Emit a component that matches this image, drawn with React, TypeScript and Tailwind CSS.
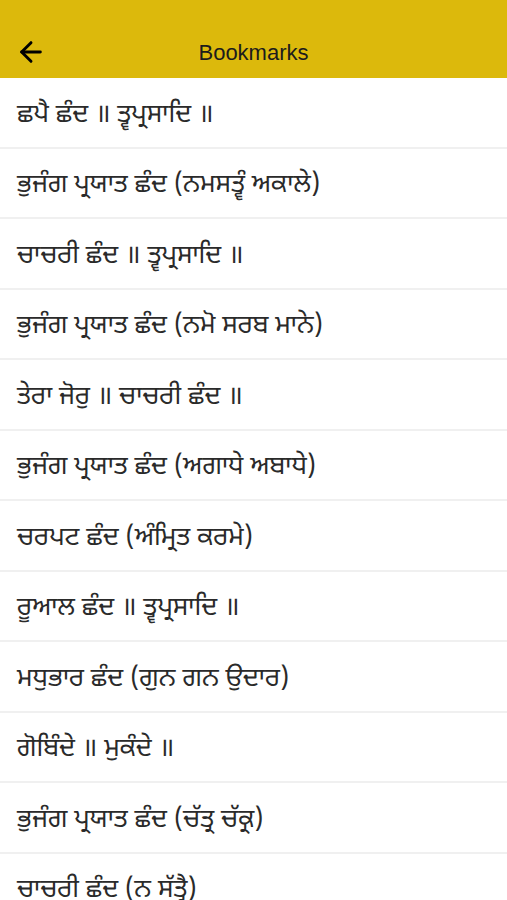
import { ArrowLeft } from "lucide-react";

const bookmarks = [
  "ਛਪੈ ਛੰਦ ॥ ਤ੍ਵਪ੍ਰਸਾਦਿ ॥",
  "ਭੁਜੰਗ ਪ੍ਰਯਾਤ ਛੰਦ (ਨਮਸਤ੍ਵੰ ਅਕਾਲੇ)",
  "ਚਾਚਰੀ ਛੰਦ ॥ ਤ੍ਵਪ੍ਰਸਾਦਿ ॥",
  "ਭੁਜੰਗ ਪ੍ਰਯਾਤ ਛੰਦ (ਨਮੋ ਸਰਬ ਮਾਨੇ)",
  "ਤੇਰਾ ਜੋਰੁ ॥ ਚਾਚਰੀ ਛੰਦ ॥",
  "ਭੁਜੰਗ ਪ੍ਰਯਾਤ ਛੰਦ (ਅਗਾਧੇ ਅਬਾਧੇ)",
  "ਚਰਪਟ ਛੰਦ (ਅੰਮ੍ਰਿਤ ਕਰਮੇ)",
  "ਰੂਆਲ ਛੰਦ ॥ ਤ੍ਵਪ੍ਰਸਾਦਿ ॥",
  "ਮਧੁਭਾਰ ਛੰਦ (ਗੁਨ ਗਨ ਉਦਾਰ)",
  "ਗੋਬਿੰਦੇ ॥ ਮੁਕੰਦੇ ॥",
  "ਭੁਜੰਗ ਪ੍ਰਯਾਤ ਛੰਦ (ਚੱਤ੍ਰ ਚੱਕ੍ਰ)",
  "ਚਾਚਰੀ ਛੰਦ (ਨ ਸੱਤ੍ਰੈ)",
];

export default function App() {
  return (
    <div className="h-[900px] overflow-hidden bg-white font-['Noto_Sans_Gurmukhi','Noto_Sans','DejaVu_Sans',sans-serif]">
      {/* Header */}
      <div className="flex h-[78px] items-center bg-[#dcb90c] pt-[26px]">
        <button className="flex w-[62px] items-center justify-center text-black">
          <ArrowLeft size={32} strokeWidth={2.2} />
        </button>
        <h1 className="flex-1 pr-[62px] text-center font-['Liberation_Sans',sans-serif] text-[22px] text-[#1c1c1c]">
          Bookmarks
        </h1>
      </div>

      {/* List */}
      <ul>
        {bookmarks.map((title) => (
          <li
            key={title}
            className="box-border flex h-[70.5px] items-center border-b-2 border-[#f0f0f0] px-[17px] pt-[7px] text-[26px] leading-none text-[#2a2a2a]"
          >
            {title}
          </li>
        ))}
      </ul>
    </div>
  );
}
